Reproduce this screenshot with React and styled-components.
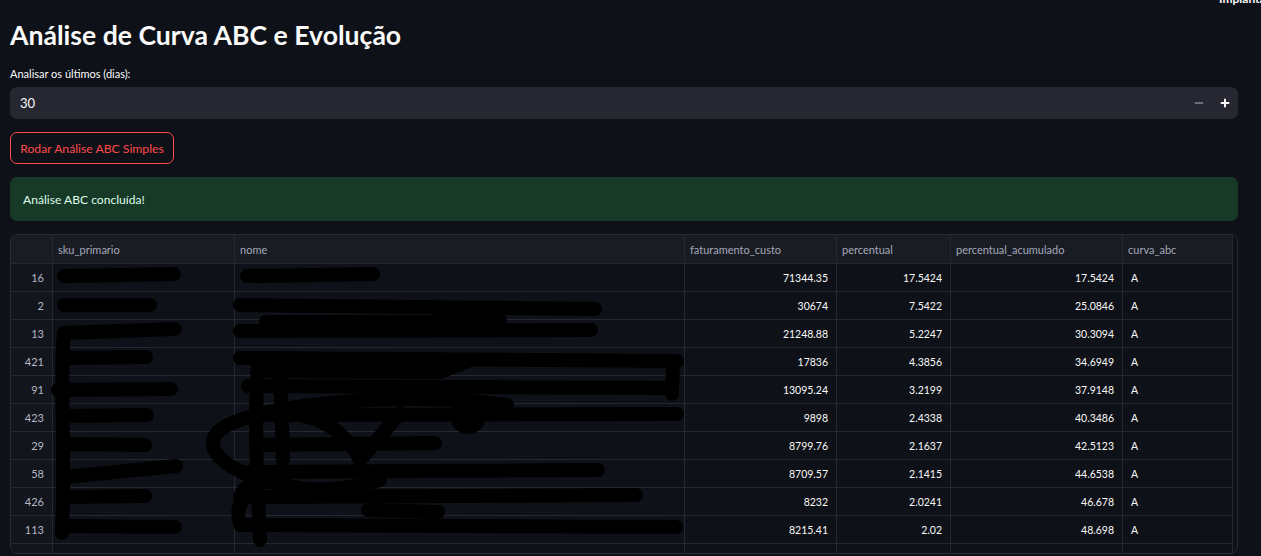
import React from "react";
import styled, { createGlobalStyle } from "styled-components";
import { Minus, Plus } from "lucide-react";

const GlobalStyle = createGlobalStyle`
  html, body {
    margin: 0;
    background: #0e1117;
    overflow: hidden;
  }
  body {
    font-family: "Lato", "Noto Sans", sans-serif;
    color: #fafafa;
  }
`;

const rows = [
  ["16", "71344.35", "17.5424", "17.5424", "A"],
  ["2", "30674", "7.5422", "25.0846", "A"],
  ["13", "21248.88", "5.2247", "30.3094", "A"],
  ["421", "17836", "4.3856", "34.6949", "A"],
  ["91", "13095.24", "3.2199", "37.9148", "A"],
  ["423", "9898", "2.4338", "40.3486", "A"],
  ["29", "8799.76", "2.1637", "42.5123", "A"],
  ["58", "8709.57", "2.1415", "44.6538", "A"],
  ["426", "8232", "2.0241", "46.678", "A"],
  ["113", "8215.41", "2.02", "48.698", "A"],
];

const columns = [
  "",
  "sku_primario",
  "nome",
  "faturamento_custo",
  "percentual",
  "percentual_acumulado",
  "curva_abc",
];

// hand drawn redaction marks, in page coordinates
const scribbles = [
  "M64 276 L174 274",
  "M64 305 L150 305",
  "M64 333 L175 329",
  "M64 358 L146 357",
  "M58 390 L171 389",
  "M65 416 L147 415",
  "M65 444 L145 445",
  "M65 477 L176 466",
  "M65 497 L145 496",
  "M65 526 L175 527",
  "M63 340 C 61 400, 65 470, 62 533",
  "M247 276 L373 274",
  "M240 305 L595 309",
  "M440 314 C 470 320, 490 322, 500 320",
  "M266 322 L466 322",
  "M240 331 L591 330",
  "M240 358 L677 361",
  "M262 371 L440 372",
  "M445 370 L470 360",
  "M248 386 L672 388",
  "M673 362 L672 394",
  "M257 415 L677 414",
  "M261 445 L435 443",
  "M507 405 C 420 392, 262 400, 220 430 C 197 450, 232 478, 300 488 C 330 492, 360 486, 380 480",
  "M258 362 C 254 420, 257 480, 260 540",
  "M280 367 L283 460",
  "M362 458 L400 413",
  "M300 415 C 330 420, 350 440, 360 460",
  "M246 472 L598 470",
  "M240 497 C 243 487, 252 482, 264 482",
  "M240 497 L636 495",
  "M368 510 L438 512",
  "M240 525 L676 527",
  "M240 523 C 237 515, 238 507, 242 502",
];

export default function App() {
  return (
    <Page>
      <GlobalStyle />
      <CornerText>Implanta</CornerText>
      <Title>Análise de Curva ABC e Evolução</Title>

      <Field>
        <FieldLabel>Analisar os últimos (dias):</FieldLabel>
        <NumberInput>
          <InputValue>30</InputValue>
          <StepButton $muted>
            <Minus size={12} strokeWidth={4} />
          </StepButton>
          <StepButton>
            <Plus size={12} strokeWidth={4} />
          </StepButton>
        </NumberInput>
      </Field>

      <RunButton>Rodar Análise ABC Simples</RunButton>

      <Alert>Análise ABC concluída!</Alert>

      <TableFrame>
        <Grid>
          {columns.map((c, i) => (
            <HeadCell key={c + i}>{c}</HeadCell>
          ))}
          {rows.map((r) => (
            <React.Fragment key={r[0]}>
              <Cell $index>{r[0]}</Cell>
              <Cell />
              <Cell />
              <Cell $num>{r[1]}</Cell>
              <Cell $num>{r[2]}</Cell>
              <Cell $num>{r[3]}</Cell>
              <Cell>{r[4]}</Cell>
            </React.Fragment>
          ))}
          {columns.map((c, i) => (
            <Cell key={"e" + i} $index={i === 0} />
          ))}
        </Grid>
        <Redaction viewBox="10 234 1228 320" width="1228" height="320">
          {scribbles.map((d, i) => (
            <path key={i} d={d} />
          ))}
          <circle cx="468" cy="416" r="18" fill="#000" stroke="none" />
        </Redaction>
      </TableFrame>
    </Page>
  );
}

const Page = styled.div`
  position: relative;
  padding: 15px 23px 0 10px;
  display: flex;
  flex-direction: column;
  align-items: stretch;
`;

const CornerText = styled.div`
  position: absolute;
  top: -9px;
  left: 1219px;
  font-size: 12px;
  font-weight: 700;
  color: #fafafa;
  white-space: nowrap;
`;

const Title = styled.h1`
  margin: 0;
  font-size: 26.6px;
  line-height: 40px;
  font-weight: 700;
  color: #fafafa;
`;

const Field = styled.div`
  margin-top: 11px;
  display: flex;
  flex-direction: column;
  gap: 5px;
`;

const FieldLabel = styled.label`
  font-size: 11px;
  line-height: 16px;
  color: #fafafa;
`;

const NumberInput = styled.div`
  height: 32px;
  background: #262730;
  border-radius: 7px;
  display: flex;
  align-items: center;
  padding-left: 10px;
`;

const InputValue = styled.span`
  flex: 1;
  font-size: 13px;
  color: #fafafa;
`;

const StepButton = styled.span`
  width: 26px;
  height: 32px;
  display: flex;
  align-items: center;
  justify-content: center;
  color: ${(p) => (p.$muted ? "#6c6f79" : "#fafafa")};
  & svg {
    display: block;
  }
`;

const RunButton = styled.button`
  align-self: flex-start;
  margin-top: 13px;
  height: 32px;
  width: 164px;
  padding: 0;
  background: transparent;
  border: 1px solid #ff4b4b;
  border-radius: 7px;
  color: #ff4b4b;
  font-family: inherit;
  font-size: 12.2px;
`;

const Alert = styled.div`
  margin-top: 13px;
  height: 44px;
  display: flex;
  align-items: center;
  padding: 0 13px;
  background: #173928;
  border-radius: 7px;
  color: #dffde9;
  font-size: 12.1px;
`;

const TableFrame = styled.div`
  position: relative;
  margin-top: 13px;
  height: 320px;
  box-sizing: border-box;
  border: 1px solid #2a2c34;
  border-radius: 7px;
  overflow: hidden;
  background: #0e1117;
`;

const Grid = styled.div`
  display: grid;
  grid-template-columns: 42px 182px 450px 152px 114px 172px 110px;
  grid-template-rows: 29px;
  grid-auto-rows: 28px;
`;

const HeadCell = styled.div`
  box-sizing: border-box;
  border-right: 1px solid #262830;
  border-bottom: 1px solid #262830;
  background: #1a1c24;
  display: flex;
  align-items: center;
  padding: 0 8px 0 5px;
  font-size: 11px;
  color: #a3a8b8;
  white-space: nowrap;
  overflow: hidden;
`;

const Cell = styled.div`
  box-sizing: border-box;
  border-right: 1px solid #262830;
  border-bottom: 1px solid #262830;
  background: ${(p) => (p.$index ? "#12151c" : "#0e1117")};
  display: flex;
  align-items: center;
  justify-content: ${(p) => (p.$num || p.$index ? "flex-end" : "flex-start")};
  padding: 0 8px;
  font-size: ${(p) => (p.$index ? "11px" : "10.5px")};
  color: ${(p) => (p.$index ? "#b4b8c4" : "#fafafa")};
  white-space: nowrap;
  overflow: hidden;
`;

const Redaction = styled.svg`
  position: absolute;
  top: -1px;
  left: -1px;
  pointer-events: none;
  fill: none;
  stroke: #000;
  stroke-width: 14;
  stroke-linecap: round;
  stroke-linejoin: round;
`;
